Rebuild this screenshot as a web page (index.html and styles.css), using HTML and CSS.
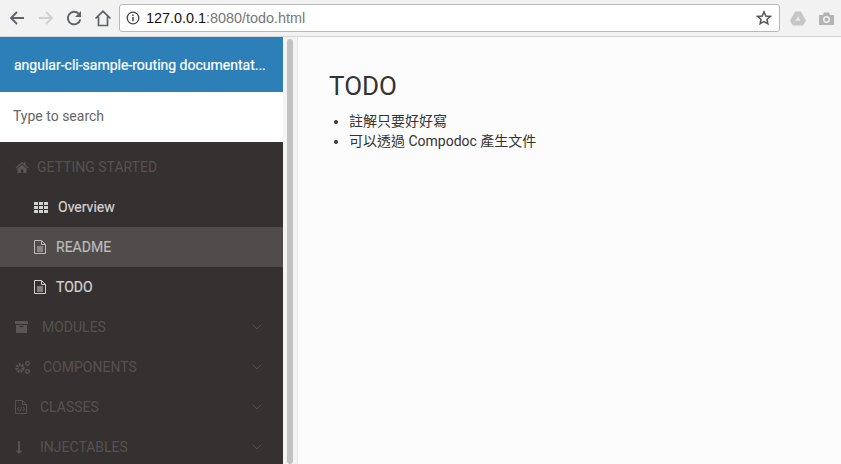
FILE: index.html
```html
<!DOCTYPE html>
<html lang="zh-Hant">
<head>
<meta charset="utf-8">
<title>TODO</title>
<link rel="stylesheet" href="styles.css">
</head>
<body>
<header class="toolbar">
  <div class="nav-buttons">
    <svg class="tool" width="18" height="18" viewBox="0 0 18 18"><path d="M16 9H3.500M9 3 3 9l6 6" fill="none" stroke="#5f6368" stroke-width="1.800"/></svg>
    <svg class="tool" width="18" height="18" viewBox="0 0 18 18"><path d="M2 9h12.500M9 3l6 6-6 6" fill="none" stroke="#cfcfcf" stroke-width="1.800"/></svg>
    <svg class="tool" width="18" height="18" viewBox="0 0 18 18"><path d="M15.300 10.500A6.300 6.300 0 1 1 13.700 4.700" fill="none" stroke="#5f6368" stroke-width="1.900"/><path d="M16 2v6h-6z" fill="#5f6368"/></svg>
    <svg class="tool" width="18" height="18" viewBox="0 0 18 18"><path d="M1.500 9.500 9 2.300l7.500 7.200M4.500 7.500v9h9v-9" fill="none" stroke="#5f6368" stroke-width="1.700"/></svg>
  </div>
  <div class="omnibox">
    <svg width="14" height="14" viewBox="0 0 14 14"><circle cx="7" cy="7" r="5.800" fill="none" stroke="#444" stroke-width="1.300"/><path d="M7 6v4.200M7 3.500v1.500" stroke="#444" stroke-width="1.500"/></svg>
    <span class="url"><b>127.0.0.1</b>:8080/todo.html</span>
    <svg class="star" width="16" height="16" viewBox="0 0 16 16"><path d="m8 1.800 1.800 4.200 4.500.4-3.400 3 1 4.400L8 11.500l-3.900 2.300 1-4.400-3.400-3 4.500-.4z" fill="none" stroke="#555" stroke-width="1.500"/></svg>
  </div>
  <div class="extensions">
    <svg width="16" height="15" viewBox="0 0 17 15"><path d="M5.500 0h6L17 9.500 14 15H3L0 9.500z" fill="#c6c6c6"/><path d="M8.500 5 5.800 10h5.400z" fill="#e6e6e6"/></svg>
    <svg width="15" height="13" viewBox="0 0 15 13"><path d="M0 3h4l1-2.500h5L11 3h4v10H0z" fill="#b4b4b4"/><circle cx="7.500" cy="7.500" r="3.500" fill="#f1f1f1"/><circle cx="7.500" cy="7.500" r="2" fill="#b4b4b4"/></svg>
  </div>
</header>
<div class="page">
  <nav class="sidebar">
    <div class="brand">angular-cli-sample-routing documentat...</div>
    <div class="search">Type to search</div>
    <ul class="menu">
      <li class="item head">
        <svg class="ico" width="14" height="12" viewBox="0 0 14 12"><path d="M7 1 0.500 6.500l.8.900L7 2.700l5.700 4.700.8-.9L10.500 4V1.200H9v1.600zM2.500 7.500V12h3.300V8.500h2.400V12h3.300V7.500L7 3.800z" fill="#5a5655"/></svg>
        <span>GETTING STARTED</span>
      </li>
      <li class="item sub first">
        <svg class="ico-grid" width="14" height="11" viewBox="0 0 14 11"><path d="M0 0h4v3H0zM5 0h4v3H5zM10 0h4v3h-4zM0 4h4v3H0zM5 4h4v3H5zM10 4h4v3h-4zM0 8h4v3H0zM5 8h4v3H5zM10 8h4v3h-4z" fill="#d3d1d0"/></svg>
        <span>Overview</span>
      </li>
      <li class="item sub active">
        <svg class="ico-doc" width="12" height="14" viewBox="0 0 12 14"><path d="M.5.500h7l4 4v9H.500zM7.500.500v4h4M3 7h6M3 9h6M3 11h6" fill="none" stroke="#bdbbba"/></svg>
        <span>README</span>
      </li>
      <li class="item sub">
        <svg class="ico-doc" width="12" height="14" viewBox="0 0 12 14"><path d="M.5.500h7l4 4v9H.500zM7.500.500v4h4M3 7h6M3 9h6M3 11h6" fill="none" stroke="#d3d1d0"/></svg>
        <span>TODO</span>
      </li>
      <li class="item head">
        <svg class="ico" width="13" height="12" viewBox="0 0 13 12"><path d="M0 0h13v3H0zM1 4h11v8H1z" fill="#5a5655"/><path d="M4.500 5.500h4" stroke="#353130" stroke-width="1"/></svg>
        <span class="gap-modules">MODULES</span>
        <svg class="chev" width="10" height="6" viewBox="0 0 10 6"><path d="M.5.500 5 5 9.500.500" fill="none" stroke="#504c4b" stroke-width="1"/></svg>
      </li>
      <li class="item head">
        <svg class="ico" width="15" height="13" viewBox="0 0 15 13"><circle cx="5" cy="7" r="3.200" fill="none" stroke="#5a5655" stroke-width="3" stroke-dasharray="1.900 .8"/><circle cx="12.500" cy="2.500" r="1.800" fill="none" stroke="#5a5655" stroke-width="1.300"/><circle cx="12.500" cy="10.500" r="1.800" fill="none" stroke="#5a5655" stroke-width="1.300"/></svg>
        <span class="gap-components">COMPONENTS</span>
        <svg class="chev" width="10" height="6" viewBox="0 0 10 6"><path d="M.5.500 5 5 9.500.500" fill="none" stroke="#504c4b" stroke-width="1"/></svg>
      </li>
      <li class="item head">
        <svg class="ico" width="12" height="14" viewBox="0 0 12 14"><path d="M.5.500h7l4 4v9H.500zM7.500.500v4h4M4 7 2.500 9 4 11M8 7l1.500 2L8 11M6.800 6.800 5.200 11.200" fill="none" stroke="#5a5655" stroke-width=".9"/></svg>
        <span class="gap-classes">CLASSES</span>
        <svg class="chev" width="10" height="6" viewBox="0 0 10 6"><path d="M.5.500 5 5 9.500.500" fill="none" stroke="#504c4b" stroke-width="1"/></svg>
      </li>
      <li class="item head">
        <svg class="ico" width="8" height="13" viewBox="0 0 8 13"><path d="M4 0v10" stroke="#5a5655" stroke-width="1.800"/><path d="M0.500 9.500h7L4 13z" fill="#5a5655"/></svg>
        <span class="gap-injectables">INJECTABLES</span>
        <svg class="chev" width="10" height="6" viewBox="0 0 10 6"><path d="M.5.500 5 5 9.500.500" fill="none" stroke="#504c4b" stroke-width="1"/></svg>
      </li>
    </ul>
  </nav>
  <div class="scrollbar"><div class="thumb"></div></div>
  <main class="content">
    <h1>TODO</h1>
    <ul class="notes">
      <li>註解只要好好寫</li>
      <li>可以透過 Compodoc 產生文件</li>
    </ul>
  </main>
</div>
</body>
</html>
```

FILE: styles.css
```css
html, body {
  margin: 0;
  height: 100%;
  overflow: hidden;
}
body {
  display: flex;
  flex-direction: column;
  font-family: Roboto, "Noto Sans CJK TC", sans-serif;
  background: #fcfcfc;
}
.toolbar {
  height: 36px;
  flex: none;
  display: flex;
  align-items: center;
  background: #f2f2f2;
  border-bottom: 1px solid #d4d4d4;
  padding: 0 7px 0 8px;
}
.nav-buttons {
  display: flex;
  align-items: center;
  gap: 10.500px;
}
.omnibox {
  flex: 1;
  height: 26px;
  margin: 0 10px 0 7.500px;
  display: flex;
  align-items: center;
  padding: 0 7px 0 6px;
  background: #fff;
  border: 1px solid #b8b8b8;
  border-radius: 3px;
}
.url {
  flex: 1;
  margin-left: 6px;
  font-family: "Liberation Sans", Arial, sans-serif;
  font-size: 14.400px;
  color: #777;
}
.url b {
  font-weight: 400;
  color: #111;
}
.extensions {
  display: flex;
  align-items: center;
  gap: 13px;
}
.page {
  flex: 1;
  min-height: 0;
  display: flex;
}
.sidebar {
  width: 283px;
  flex: none;
  background: #353130;
}
.brand {
  height: 50px;
  padding: 0 0 5px 14px;
  line-height: 57px;
  background: #2d7fb8;
  color: #fff;
  font-size: 14px;
  white-space: nowrap;
  overflow: hidden;
  -webkit-text-stroke: 0.200px #fff;
}
.search {
  height: 50px;
  padding-left: 13px;
  line-height: 49px;
  background: #fff;
  color: #666;
  font-size: 14px;
}
.menu {
  list-style: none;
  margin: 0;
  padding: 5px 0 0;
}
.item {
  height: 40px;
  display: flex;
  align-items: center;
  font-size: 14px;
  color: #d3d1d0;
}
.head {
  padding-left: 15px;
  color: #555150;
}
.sub {
  padding-left: 34px;
  -webkit-text-stroke: 0.200px currentColor;
}
.active {
  background: #504c4b;
  color: #bdbbba;
}
.ico-grid {
  margin-right: 10px;
}
.ico-doc {
  margin-right: 10px;
}
.ico {
  flex: none;
  margin-right: 8px;
}
.gap-modules { margin-left: 6px; }
.gap-components { margin-left: 5px; }
.gap-classes { margin-left: 5px; }
.gap-injectables { margin-left: 9px; }
.chev {
  margin-left: auto;
  margin-right: 21px;
}
.scrollbar {
  width: 15px;
  flex: none;
  background: #f4f4f4;
  box-sizing: border-box;
  padding: 2px 4px 0;
  border-right: 1px solid #e6e6e6;
}
.thumb {
  height: 100%;
  background: #c2c2c2;
  border-radius: 4px;
}
.content {
  flex: 1;
  padding: 34px 31px 0;
  background: #fcfcfc;
  color: #333;
}
h1 {
  margin: 0;
  font-size: 26px;
  font-weight: 400;
  line-height: 30px;
}
.notes {
  margin: 10px 0 0;
  padding-left: 20px;
  font-size: 14px;
  line-height: 20px;
}
```
